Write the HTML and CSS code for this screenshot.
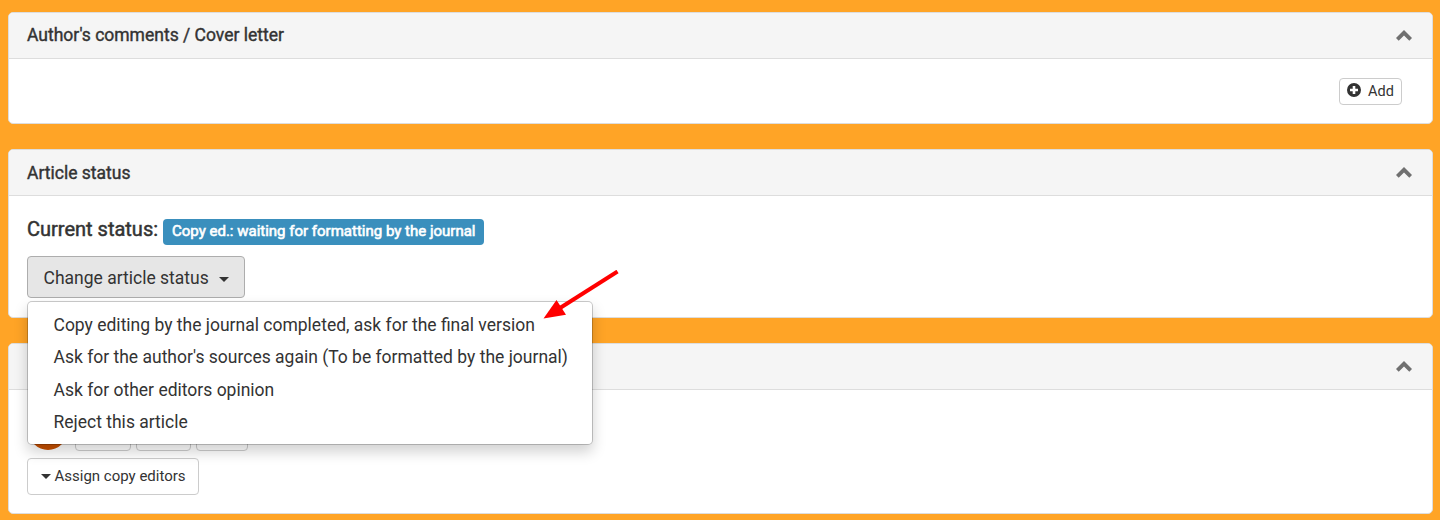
FILE: index.html
```
<!DOCTYPE html>
<html lang="en">
<head>
<meta charset="utf-8">
<title>Article status</title>
<link rel="stylesheet" href="styles.css">
</head>
<body>
<main class="page">
  <section class="panel">
    <header class="panel-heading">
      <h2 class="panel-title title-comments">Author's comments / Cover letter</h2>
      <svg class="chevron" viewBox="0 0 16 11"><path d="M8 0 16 8 13.3 10.7 8 5.6 2.7 10.7 0 8Z"/></svg>
    </header>
    <div class="panel-body comments-body">
      <button class="btn btn-add">
        <svg class="plus" viewBox="0 0 14 14"><path fill-rule="evenodd" d="M7 0a7 7 0 1 1 0 14A7 7 0 0 1 7 0ZM5.7 3v2.7H3v2.6h2.7V11h2.6V8.3H11V5.7H8.3V3Z"/></svg>
        <span>Add</span>
      </button>
    </div>
  </section>

  <section class="panel status-panel">
    <header class="panel-heading">
      <h2 class="panel-title">Article status</h2>
      <svg class="chevron" viewBox="0 0 16 11"><path d="M8 0 16 8 13.3 10.7 8 5.6 2.7 10.7 0 8Z"/></svg>
    </header>
    <div class="panel-body status-body">
      <div class="status-line">
        <span class="status-label">Current status:</span>
        <span class="label">Copy ed.: waiting for formatting by the journal</span>
      </div>
      <div class="dropdown">
        <button class="btn btn-status"><span>Change article status</span><i class="caret"></i></button>
        <ul class="menu">
          <li>Copy editing by the journal completed, ask for the final version</li>
          <li>Ask for the author's sources again (To be formatted by the journal)</li>
          <li>Ask for other editors opinion</li>
          <li>Reject this article</li>
        </ul>
      </div>
    </div>
  </section>

  <section class="panel editors-panel">
    <header class="panel-heading editors-heading">
      <svg class="chevron" viewBox="0 0 16 11"><path d="M8 0 16 8 13.3 10.7 8 5.6 2.7 10.7 0 8Z"/></svg>
    </header>
    <div class="panel-body editors-body">
      <div class="editor-row">
        <span class="avatar"></span>
        <span class="chip chip-a"></span>
        <span class="chip chip-b"></span>
        <span class="chip chip-c"></span>
      </div>
      <button class="btn btn-assign"><i class="caret"></i><span>Assign copy editors</span></button>
    </div>
  </section>
</main>
<svg class="arrow" viewBox="0 0 80 52"><path d="M77.5 1.5 20 38" stroke="#f00" stroke-width="4"/><path d="M3.5 48.5 16.5 30 26 44.7Z" fill="#f00"/></svg>
</body>
</html>
```
FILE: styles.css
```
* { box-sizing: border-box; }
body {
  margin: 0;
  height: 520px;
  overflow: hidden;
  background: #ffa426;
  color: #333;
  font-family: Roboto, "Liberation Sans", sans-serif;
}
.page {
  display: flex;
  flex-direction: column;
  gap: 25px;
  padding: 12px 7px 0 8px;
}
.panel {
  height: 112px;
  background: #fff;
  border: 1px solid #ddd;
  border-radius: 5px;
}
.status-panel { height: 169px; }
.editors-panel { height: 171px; }
.panel-heading {
  display: flex;
  align-items: center;
  justify-content: space-between;
  height: 46px;
  padding: 0 20px 0 18px;
  background: #f5f5f5;
  border-bottom: 1px solid #ddd;
  border-radius: 4px 4px 0 0;
}
.editors-heading { justify-content: flex-end; }
.panel-title {
  margin: 0;
  font-size: 17.5px;
  font-weight: 400;
  line-height: 24px;
  -webkit-text-stroke: 0.4px #333;
}
.title-comments { padding-bottom: 1px; }
.chevron {
  width: 16px;
  height: 11px;
  fill: #707070;
}
.btn {
  display: flex;
  align-items: center;
  margin: 0;
  color: #333;
  font-family: inherit;
  background: #fff;
  border: 1px solid #ccc;
  border-radius: 4px;
  white-space: nowrap;
}
.comments-body {
  display: flex;
  justify-content: flex-end;
  padding: 19px 30px 0 0;
}
.btn-add {
  width: 63px;
  height: 27px;
  gap: 7px;
  padding: 0 0 1px 7px;
  font-size: 14.5px;
}
.plus {
  width: 14px;
  height: 14px;
  margin-top: -2px;
  fill: #333;
}
.status-body { padding: 23px 18px 0; }
.status-line {
  display: flex;
  height: 26px;
  gap: 5px;
}
.status-label {
  width: 131px;
  font-size: 20px;
  line-height: 21px;
  white-space: nowrap;
  -webkit-text-stroke: 0.5px #333;
}
.label {
  width: 321px;
  height: 26px;
  padding-left: 9px;
  border-radius: 4px;
  background: #3a8fbd;
  color: #fff;
  font-size: 15px;
  line-height: 24px;
  white-space: nowrap;
  -webkit-text-stroke: 0.6px #fff;
}
.dropdown {
  position: relative;
  margin-top: 11px;
}
.btn-status {
  width: 218px;
  height: 42px;
  gap: 10px;
  padding: 2px 0 0 15.5px;
  background: #e6e6e6;
  border-color: #adadad;
  font-size: 17.5px;
}
.btn-status .caret { margin-top: 2px; }
.caret {
  border: 5px solid transparent;
  border-top-color: #333;
  border-bottom: 0;
}
.menu {
  position: absolute;
  z-index: 2;
  top: 45px;
  left: 0;
  width: 566px;
  height: 144px;
  margin: 0;
  padding: 7px 0 0 25.5px;
  list-style: none;
  background: #fff;
  border: 1px solid rgba(0, 0, 0, 0.2);
  background-clip: padding-box;
  border-radius: 5px;
  box-shadow: 0 7px 14px rgba(0, 0, 0, 0.18);
  font-size: 17.5px;
  line-height: 32.4px;
  white-space: nowrap;
}
.editors-body { padding: 24px 18px 0; }
.editor-row {
  display: flex;
  align-items: flex-end;
  height: 37px;
}
.avatar {
  width: 38px;
  height: 38px;
  margin: 0 0 1px 2px;
  border-radius: 50%;
  background: #c85000;
}
.chip {
  height: 30px;
  margin-right: 5px;
  border: 1px solid #ccc;
  border-radius: 4px;
}
.chip-a { width: 56px; margin-left: 8px; }
.chip-b { width: 55px; }
.chip-c { width: 52px; }
.btn-assign {
  width: 172px;
  height: 37px;
  margin-top: 7px;
  gap: 3.5px;
  padding: 0 0 1px 13px;
  font-size: 15px;
}
.arrow {
  position: absolute;
  z-index: 3;
  left: 540px;
  top: 270px;
  width: 80px;
  height: 52px;
}
```
